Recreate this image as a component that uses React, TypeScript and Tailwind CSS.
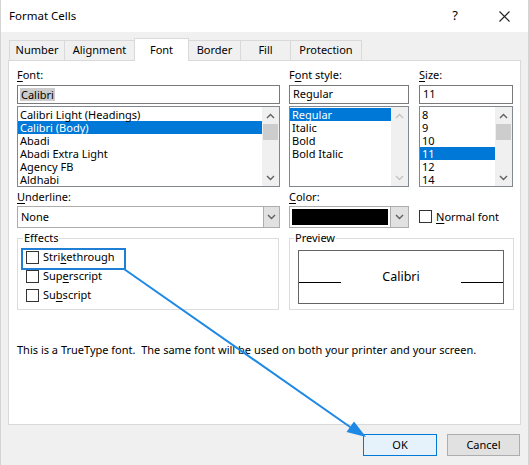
import React from 'react';

const FONT = '"Segoe UI", "Noto Sans", sans-serif';

function U({ children }: { children: React.ReactNode }) {
  return <span className="underline underline-offset-[2px]">{children}</span>;
}

function Chevron({ up, dim }: { up?: boolean; dim?: boolean }) {
  return (
    <svg width="9" height="6" viewBox="0 0 9 6">
      <polyline
        points={up ? '1,5 4.5,1.5 8,5' : '1,1 4.5,4.5 8,1'}
        fill="none"
        stroke={dim ? '#c4c4c4' : '#606060'}
        strokeWidth="1.4"
      />
    </svg>
  );
}

function Scrollbar({ thumb, dim }: { thumb?: boolean; dim?: boolean }) {
  return (
    <div className="w-[17px] bg-[#f0f0f0] flex flex-col shrink-0">
      <div className="h-[17px] flex items-center justify-center">
        <Chevron up dim={dim} />
      </div>
      <div className="flex-1">
        {thumb && <div className="h-[16px] bg-[#cdcdcd] mx-[1px]" />}
      </div>
      <div className="h-[17px] flex items-center justify-center">
        <Chevron dim={dim} />
      </div>
    </div>
  );
}

function ListBox({
  items,
  selected,
  thumb,
  dim,
}: {
  items: string[];
  selected: number;
  thumb?: boolean;
  dim?: boolean;
}) {
  return (
    <div className="h-[81px] border border-[#828790] bg-white flex mt-[2px]">
      <div className="flex-1 pt-[1px] overflow-hidden">
        {items.map((it, i) => (
          <div
            key={it}
            className={
              'h-[13px] leading-[13px] pl-[2px] whitespace-nowrap ' +
              (i === selected ? 'bg-[#0078d7] text-white' : '')
            }
          >
            {it}
          </div>
        ))}
      </div>
      <Scrollbar thumb={thumb} dim={dim} />
    </div>
  );
}

function TextBox({ children }: { children: React.ReactNode }) {
  return (
    <div className="h-[19px] mt-[3px] border border-[#7a7a7a] bg-white flex items-center pl-[2px]">
      {children}
    </div>
  );
}

function Check({ label }: { label: React.ReactNode }) {
  return (
    <div className="h-[19px] flex items-center">
      <div className="w-[13px] h-[13px] border border-[#333] bg-white" />
      <span className="ml-[4px]">{label}</span>
    </div>
  );
}

const tabs = ['Number', 'Alignment', 'Font', 'Border', 'Fill', 'Protection'];
const tabW = ['w-[56px]', 'w-[71px]', 'w-[55px]', 'w-[53px]', 'w-[51px]', 'w-[72px]'];

export default function App() {
  return (
    <div
      className="relative w-[529px] h-[465px] bg-[#f0f0f0] text-[11px] text-black overflow-hidden border-x border-[#d4d4d4]"
      style={{ fontFamily: FONT }}
    >
      {/* title bar */}
      <div className="h-[32px] bg-white flex items-center pl-[8px] pr-[18px]">
        <span className="text-[11.5px]">Format Cells</span>
        <span className="ml-auto text-[13px] mr-[41px]">?</span>
        <svg width="11" height="11" viewBox="0 0 11 11">
          <path d="M0.5 0.5 L10.5 10.5 M10.5 0.5 L0.5 10.5" stroke="#222" strokeWidth="1.1" />
        </svg>
      </div>

      {/* tabs */}
      <div className="flex pl-[9px] mt-[8px] h-[20px] relative z-10">
        {tabs.map((t, i) =>
          t === 'Font' ? (
            <div
              key={t}
              className={tabW[i] + ' h-[23px] -mt-[2px] -ml-[1px] bg-white border border-b-0 border-[#d9d9d9] flex items-center justify-center'}
            >
              {t}
            </div>
          ) : (
            <div
              key={t}
              className={tabW[i] + ' h-[20px] bg-[#f0f0f0] border border-b-0 border-[#d9d9d9] -ml-[1px] flex items-center justify-center'}
            >
              {t}
            </div>
          )
        )}
      </div>

      {/* tab page */}
      <div className="mx-[7px] h-[365px] bg-white border border-[#d9d9d9] pl-[8px] pt-[7px]">
        <div className="flex">
          <div className="w-[263px]">
            <div className="h-[14px] leading-[14px]">
              <U>F</U>ont:
            </div>
            <TextBox>
              <span className="bg-[#cccccc] px-[1px] leading-[13px]">Calibri</span>
            </TextBox>
            <ListBox
              items={['Calibri Light (Headings)', 'Calibri (Body)', 'Abadi', 'Abadi Extra Light', 'Agency FB', 'Aldhabi']}
              selected={1}
              thumb
            />
          </div>
          <div className="w-[120px] ml-[9px]">
            <div className="h-[14px] leading-[14px]">
              F<U>o</U>nt style:
            </div>
            <TextBox>
              <span className="pl-[1px]">Regular</span>
            </TextBox>
            <ListBox items={['Regular', 'Italic', 'Bold', 'Bold Italic']} selected={0} dim />
          </div>
          <div className="w-[94px] ml-[10px]">
            <div className="h-[14px] leading-[14px]">
              <U>S</U>ize:
            </div>
            <TextBox>
              <span className="pl-[1px]">11</span>
            </TextBox>
            <ListBox items={['8', '9', '10', '11', '12', '14']} selected={3} thumb />
          </div>
        </div>

        <div className="flex mt-[3px]">
          <div className="w-[263px]">
            <div className="h-[14px] leading-[14px]">
              <U>U</U>nderline:
            </div>
            <div className="h-[22px] mt-[2px] border border-[#adadad] bg-white flex">
              <span className="flex-1 pl-[3px] leading-[20px]">None</span>
              <div className="w-[16px] bg-[#e1e1e1] border-l border-[#adadad] flex items-center justify-center">
                <Chevron />
              </div>
            </div>
          </div>
          <div className="w-[120px] ml-[9px]">
            <div className="h-[14px] leading-[14px]">
              <U>C</U>olor:
            </div>
            <div className="h-[22px] mt-[2px] border border-[#adadad] bg-white flex">
              <div className="flex-1 p-[2px]">
                <div className="h-full bg-black" />
              </div>
              <div className="w-[18px] bg-[#e1e1e1] border-l border-[#adadad] flex items-center justify-center">
                <Chevron />
              </div>
            </div>
          </div>
          <div className="ml-[10px] pt-[20px] flex items-start">
            <div className="w-[13px] h-[13px] border border-[#333] bg-white" />
            <span className="ml-[4px] leading-[13px]">
              <U>N</U>ormal font
            </span>
          </div>
        </div>

        <div className="flex mt-[3px]">
          <fieldset className="w-[262px] h-[79px] border border-[#dcdcdc] pl-[8px] pt-[3px]">
            <legend className="-ml-[3px] px-[1px] leading-[14px]">Effects</legend>
            <Check label={<>Stri<U>k</U>ethrough</>} />
            <Check label={<>Sup<U>e</U>rscript</>} />
            <Check label={<>Su<U>b</U>script</>} />
          </fieldset>
          <fieldset className="w-[225px] h-[79px] ml-[10px] border border-[#dcdcdc] pl-[8px] pr-[9px] pt-[5px]">
            <legend className="-ml-[4px] px-[1px] leading-[14px]">Preview</legend>
            <div className="h-[54px] border border-[#646464] flex items-center">
              <div className="w-[42px] h-px bg-black mt-[10px]" />
              <div className="flex-1 text-center text-[12.5px]">Calibri</div>
              <div className="w-[42px] h-px bg-black mt-[10px]" />
            </div>
          </fieldset>
        </div>

        <p className="mt-[32px]">
          This is a TrueType font.&nbsp; The same font will be used on both your printer and your screen.
        </p>
      </div>

      {/* buttons */}
      <div className="flex justify-end gap-[10px] mt-[9px] pr-[8px]">
        <button className="w-[74px] h-[22px] bg-[#e5f1fb] border border-[#0078d7]">OK</button>
        <button className="w-[73px] h-[22px] bg-[#e1e1e1] border border-[#adadad]">Cancel</button>
      </div>

      {/* annotation */}
      <div className="absolute left-[20px] top-[248px] w-[105px] h-[22px] border-2 border-[#1f7fd4]" />
      <svg className="absolute left-0 top-0 pointer-events-none" width="529" height="465">
        <line x1="123" y1="269" x2="352" y2="429" stroke="#1e88e5" strokeWidth="2" />
        <polygon points="365,437 345.5,432 353,421.5" fill="#1e88e5" />
      </svg>
    </div>
  );
}
